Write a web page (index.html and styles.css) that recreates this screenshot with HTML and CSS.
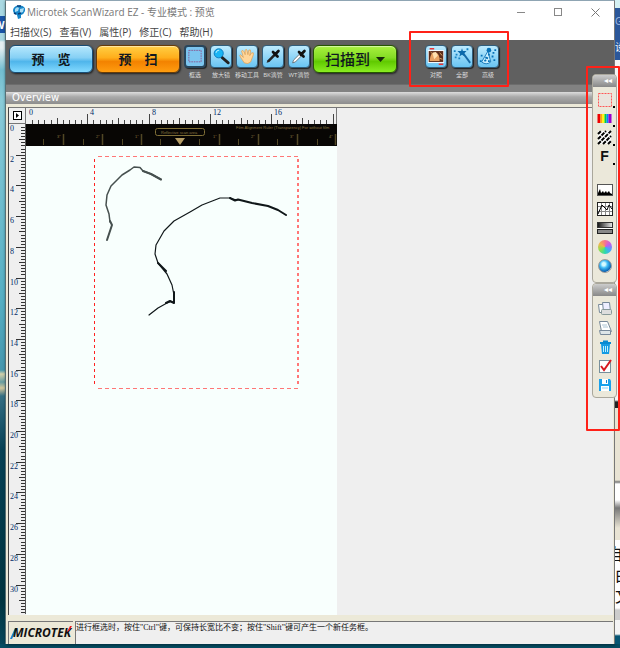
FILE: index.html
```html
<!DOCTYPE html>
<html lang="zh-CN">
<head>
<meta charset="utf-8">
<title>Microtek ScanWizard EZ</title>
<link rel="stylesheet" href="styles.css">
</head>
<body>
<div class="desktop">
  <div class="behind-left"><span class="word-mark">W</span></div>
  <main class="window">
    <header class="titlebar">
      <svg class="app-icon" width="14" height="14" viewBox="0 0 14 14"><path d="M1 5Q2 0 8 0.500Q14 1 13 6Q12 9 9 10L9 13L6 14L5 10Q1 9 1 5Z" fill="#1686c9"/><path d="M3 4Q5 1 7 3L6 6L3 7ZM8 4L12 3L11 7L8 8Z" fill="#a9dcf4"/><path d="M5 1L9 1M6 9L9 8M2 8L4 9" stroke="#0a3c78" stroke-width="1.500"/></svg>
      <h1>Microtek ScanWizard EZ - 专业模式 : 预览</h1>
      <div class="win-controls">
        <button aria-label="最小化"><svg width="9" height="9"><path d="M0 4.500H8" stroke="#888"/></svg></button>
        <button aria-label="最大化"><svg width="9" height="9"><rect x=".5" y=".5" width="7" height="7" fill="none" stroke="#888"/></svg></button>
        <button aria-label="关闭"><svg width="9" height="9"><path d="M.5 .5L8.500 8.500M8.500 .5L.5 8.500" stroke="#777"/></svg></button>
      </div>
    </header>
    <nav class="menubar">
      <button>扫描仪(S)</button><button>查看(V)</button><button>属性(P)</button><button>修正(C)</button><button>帮助(H)</button>
    </nav>
    <div class="toolbar">
      <button class="big blue">预&emsp;览</button>
      <button class="big orange">预&emsp;扫</button>
      <div class="tools">
        <button class="tool pressed"><svg viewBox="0 0 22 22"><rect x="3.500" y="3.500" width="15" height="14" fill="none" stroke="#8b4a86" stroke-dasharray="2 1"/></svg><span>框选</span></button>
        <button class="tool"><svg viewBox="0 0 22 22"><path d="M12 12L19 18" stroke="#222" stroke-width="3" stroke-linecap="round"/><circle cx="8.500" cy="7.500" r="5" fill="#19b5f4" stroke="#0878bd"/><path d="M5.500 7Q6 4 9 4" stroke="#c9f5ff" fill="none"/></svg><span>放大镜</span></button>
        <button class="tool"><svg viewBox="0 0 22 22"><path d="M8 18L4 12Q2 9 4 9L7 12L5 5Q6 3 8 6L9 9L9 4Q10 2 11 4L12 9L13 4Q15 3 15 5L14 10L16 7Q19 6 18 9L15 17Q12 20 8 18Z" fill="#ffd69a" stroke="#e29a45" stroke-width=".7"/></svg><span>移动工具</span></button>
        <button class="tool"><svg viewBox="0 0 22 22"><path d="M4 18L5 15L12 8L14 10L7 17Z" fill="#222"/><path d="M11 6L16 11M13 9L17 5" stroke="#111" stroke-width="3" stroke-linecap="round"/></svg><span>BK滴管</span></button>
        <button class="tool"><svg viewBox="0 0 22 22"><path d="M4 18L5 15L12 8L14 10L7 17Z" fill="#fff" stroke="#555" stroke-width=".8"/><path d="M11 6L16 11M13 9L17 5" stroke="#111" stroke-width="3" stroke-linecap="round"/></svg><span>WT滴管</span></button>
      </div>
      <button class="big green">扫描到<svg width="9" height="5"><path d="M0 0H9L4.500 5Z" fill="#172b0a"/></svg></button>
      <div class="tools extra">
        <button class="tool"><svg viewBox="0 0 22 22"><rect x="2" y="4" width="18" height="14" fill="#fff"/><rect x="3" y="5" width="16" height="12" fill="#5c2d1b"/><path d="M4 16Q5 5 11 7Q15 8 15 16Z" fill="#e7a263"/><path d="M7 7L11 6L13 10L9 14Z" fill="#ffe0ae"/><path d="M15 7L18 10M5 6L7 8M15 13L18 14" stroke="#e6b26c"/><path d="M4 2.500H9M14 19.500H19" stroke="#e33" stroke-width="1.500"/></svg><span>对照</span></button>
        <button class="tool"><svg viewBox="0 0 22 22"><path d="M12 7L20 18" stroke="#1669a5" stroke-width="2"/><path d="M11 2L12 5L16 5L13 8L14 11L11 9L8 11L9 8L6 5L10 5Z" fill="#0b69ab"/><path d="M2 5H4M4 9H6M3 12H5M16 3H18M7 13H9" stroke="#1582c4" stroke-width="2"/></svg><span>全部</span></button>
        <button class="tool"><svg viewBox="0 0 22 22"><path d="M11 5L4 17Q9 21 14 17Z" fill="#c8efff" stroke="#1476b7"/><circle cx="12" cy="4" r="2.500" fill="#0871b6"/><path d="M8 12L11 13M7 16L9 15M11 16H13M11 9H13M16 7H18M18 4H20M3 10H5M15 11H17M17 15H19M2 16H4" stroke="#0871b6" stroke-width="2"/></svg><span>高级</span></button>
      </div>
    </div>
    <div class="divider"></div>
    <h2 class="overview">Overview</h2>
    <section class="workspace" aria-label="Overview">
      <div class="corner"><button aria-label="单位"><svg width="9" height="9"><rect x=".5" y=".5" width="8" height="8" fill="#fff" stroke="#000"/><path d="M3 2V7L6 4.500Z"/></svg></button></div>
      <svg class="ruler-h" id="ruler-h" width="311" height="16"></svg>
      <svg class="ruler-v" id="ruler-v" width="17" height="490"></svg>
      <div class="page">
        <svg width="311" height="490" viewBox="26 124 311 490">
          <rect x="26" y="124" width="311" height="22" fill="#080604"/>
          <g stroke="#514725" fill="none">
            <path d="M63.500 134V145M102.500 134V145M141.500 134V145M219.500 134V145M258.500 134V145M297.500 134V145M335.500 134V145" stroke-width="1.500"/>
            <path d="M43.500 139V145M83.500 139V145M122.500 139V145M160.500 139V145M199.500 139V145M238.500 139V145M277.500 139V145M317.500 139V145"/>
            <rect x="155.500" y="128.500" width="49" height="7" rx="2" stroke="#806f37"/>
          </g>
          <path d="M175 138H185L180 145Z" fill="#b59d65"/>
          <g class="film-text"><text x="161" y="134">Reflective scan area</text><text x="236" y="129">Film Alignment Ruler (Transparency) For without film</text>
          <text x="57" y="138">3"</text><text x="96" y="138">2"</text><text x="135" y="138">1"</text><text x="213" y="138">1"</text><text x="251" y="138">2"</text><text x="290" y="138">3"</text><text x="329" y="138">4"</text></g>
          <g fill="none" stroke="#46504f" stroke-linecap="round" stroke-linejoin="round">
            <path d="M161 179.500L151 174L143 171L140 167.500L134 167L130 170L122 175L111 186L107 195L106 205L109 214L110 222" stroke-width="1.500"/>
            <path d="M110 221L112 225L107 240M161 179.500L151 174L143 171" stroke-width="2"/>
          </g>
          <g fill="none" stroke="#101719" stroke-linecap="round" stroke-linejoin="round">
            <path d="M238 200L232 199L230 198H220L202 205L190 212L174 221L164 231L156 245L155 254L158 263L167 274L172 285L174 295L174 303L171 301.500L167 303L158 308L149 315" stroke-width="1.200"/>
            <path d="M230 198L235 200.500L238 199.500L252 203L268 206L278 210L286 215M158 263L166 271M174 292V303L170 301L166 303" stroke-width="2"/>
          </g>
          <g fill="none">
            <path d="M98 156.500H298M98 388.500H298" stroke="#ff7777" stroke-dasharray="4 3"/>
            <path d="M94.500 159V386" stroke="#ff2020" stroke-dasharray="3 3"/>
            <path d="M298 159V386" stroke="#ff7777" stroke-width="2" stroke-dasharray="3 3"/>
          </g>
        </svg>
      </div>
    </section>
    <footer class="statusbar">
      <div class="logo"><svg width="7" height="11" viewBox="0 0 7 11"><path d="M0 11L5 0L7 1L2 11Z" fill="#147fd0"/></svg><span>MICROTEK</span><svg class="logo-flick" width="5" height="7" viewBox="0 0 5 7"><path d="M0 6L3 0H5L2 5Z" fill="#ed1c24"/></svg></div>
      <p>进行框选时，按住"Ctrl"键，可保持长宽比不变；按住"Shift"键可产生一个新任务框。</p>
    </footer>
  </main>
  <div class="behind-right"><span class="tab">G</span><span class="tab second">设</span><span class="doc-text">自<br>由<br>文</span></div>

  <aside class="palettes">
    <div class="palette first">
      <button class="palette-head" aria-label="收起">◂◂</button>
      <button class="more" aria-label="选框"><svg viewBox="0 0 16 16"><rect x="1.500" y="1.500" width="13" height="13" fill="#eae4dd" stroke="#ff5555" stroke-dasharray="2 1"/></svg></button>
      <button class="more" aria-label="色彩"><svg viewBox="0 0 16 16"><path d="M2 3V12" stroke="#e00" stroke-width="3"/><path d="M4.500 3V12" stroke="#fa0" stroke-width="2"/><path d="M6.500 3V12" stroke="#ff0" stroke-width="2"/><path d="M8.500 3V12" stroke="#0c4" stroke-width="2"/><path d="M10.500 3V12" stroke="#08f" stroke-width="2"/><path d="M13 3V12" stroke="#90c" stroke-width="3"/></svg></button>
      <button class="more" aria-label="网纹"><svg viewBox="0 0 16 16"><rect x="1" y="1" width="13" height="13" fill="#fff"/><path d="M1 4L4 1M1 9L9 1M1 14L14 1M6 14L14 6M11 14L14 11" stroke="#000" stroke-width="2" stroke-dasharray="4 1"/></svg></button>
      <button class="more letter" aria-label="滤镜">F</button>
      <button class="gap-before" aria-label="色阶"><svg viewBox="0 0 16 16"><rect x=".5" y="2.500" width="15" height="11" fill="#fff" stroke="#555"/><path d="M1 13V11L3 7L4 11L6 9L7 11L9 9L10 11L12 9L13 11L15 12V13Z"/></svg></button>
      <button aria-label="曲线"><svg viewBox="0 0 16 16"><rect x=".5" y="1.500" width="15" height="13" fill="#fff" stroke="#222"/><path d="M4.500 2V14M8.500 2V14M12.500 2V14M1 5.500H15M1 10.500H15" stroke="#888"/><path d="M1 13L5 4L10 9L12 4L15 8" stroke="#000" fill="none"/></svg></button>
      <button aria-label="亮度"><svg viewBox="0 0 16 16"><defs><linearGradient id="gray"><stop stop-color="#111"/><stop offset="1" stop-color="#eee"/></linearGradient></defs><rect x=".5" y="2.500" width="15" height="5" fill="url(#gray)" stroke="#333"/><path d="M1 8.500H15" stroke="#fff"/><rect x=".5" y="9.500" width="15" height="4" fill="#888" stroke="#222"/></svg></button>
      <button aria-label="色相"><i class="wheel"></i></button>
      <button aria-label="预览颜色"><i class="lens"></i></button>
    </div>
    <div class="palette">
      <button class="palette-head" aria-label="收起">◂◂</button>
      <button aria-label="复制任务"><svg viewBox="0 0 16 16"><path d="M1.500 3.500H9.500L10.500 11.500H2.500Z" fill="#fff" stroke="#789"/><path d="M5.500 1.500H12.500L13.500 10.500H6.500Z" fill="#eef" stroke="#789"/><rect x="4.500" y="8.500" width="10" height="5" rx="1" fill="#ddd" stroke="#899"/></svg></button>
      <button aria-label="新任务"><svg viewBox="0 0 16 16"><path d="M2.500 1.500H10.500L14.500 11.500H4.500Z" fill="#fff" stroke="#789"/><path d="M2.500 10.500H13.500V14.500H3.500Z" fill="#dde5e8" stroke="#789"/><path d="M5 5H10M6 7H11" stroke="#acc4d4"/></svg></button>
      <button aria-label="删除"><svg viewBox="0 0 16 16"><path d="M4 5H13L12 15H5Z" fill="#139be3"/><path d="M3 4H14M6 2.500H11" stroke="#078ad1" stroke-width="2"/><path d="M6.500 7V13M8.500 7V13M10.500 7V13" stroke="#bdefff"/></svg></button>
      <button aria-label="全选"><svg viewBox="0 0 16 16"><rect x="2.500" y="2.500" width="11" height="12" fill="#fff" stroke="#78909c"/><path d="M4 8L7 12L14 2" fill="none" stroke="#d71920" stroke-width="2"/></svg></button>
      <button aria-label="保存"><svg viewBox="0 0 16 16"><path d="M2 2H13L14 4V14H2Z" fill="#1aa1eb"/><path d="M5 2H11V7H5ZM4 9H12V14H4Z" fill="#fff"/><path d="M9 3H10V6H9Z" fill="#1686d2"/><path d="M5 11H11" stroke="#8bd1f5"/></svg></button>
    </div>
  </aside>
  <div class="mark mark-tools"></div>
  <div class="mark mark-palettes"></div>
</div>
<script src="rulers.js"></script>
</body>
</html>
```
FILE: styles.css
```css
* { box-sizing: border-box; }
body { margin: 0; font-family: "Open Sans", "Noto Sans CJK SC", sans-serif; }
button { margin: 0; padding: 0; border: 0; background: none; font: inherit; color: inherit; }
svg { display: block; }

.desktop {
  position: relative;
  display: grid;
  grid-template-columns: 6px minmax(0, 1fr) 5px;
  min-height: 100vh;
  padding-bottom: 4px;
  background: #064c62;
  overflow: hidden;
}
.behind-left {
  overflow: hidden;
  padding-top: 16px;
  border-right: 1px solid #8d9c9b;
  background: linear-gradient(#a9d8e2 0 40px, #e4eff2 42px 48px, #72bdd0 70px, #8accd9 100px, #55afc3 300px, #4697ad 370px, #d5d1a9 374px, #679da1 382px, #d3c79b 388px, #356f83 396px, #064154 450px, #003440 600px, #07465a);
}
.word-mark { display: block; height: 17px; background: #1a54a6; color: #fff; font-size: 11px; font-weight: 700; line-height: 17px; text-indent: -6px; }
.behind-right {
  overflow: hidden;
  font-size: 10px;
  background: linear-gradient(#d5f1f3 0 8px, #2b579a 8px 60px, #f4f4f4 60px 400px, #222 402px 408px, #e8e3d3 408px 480px, #777 482px, #fff 484px 500px, #777 508px, #e8e3d3 528px 540px, #fff 540px 608px, #ccc 610px 620px, #f4f4f4 620px 634px, #075573 636px);
}
.tab { display: block; height: 26px; padding-top: 13px; color: #a6bde2; line-height: 16px; }
.tab.second { color: #fff; height: 40px; }
.doc-text { display: block; margin-top: 478px; color: #111; font-size: 16px; line-height: 21px; text-indent: -8px; }

.window { display: flex; flex-direction: column; border-top: 1px solid #8fa5b3; border-right: 1px solid #777; background: #ece9d8; box-shadow: 0 1px 3px #002b38; }
.titlebar { display: flex; align-items: center; height: 22px; padding-left: 6px; background: #fff; color: #777; }
.titlebar h1 { margin: 0 auto 0 1px; font-size: 10px; font-weight: 400; line-height: 20px; white-space: nowrap; }
.win-controls { display: flex; gap: 28px; padding-right: 14px; }
.menubar { display: flex; align-items: center; gap: 8px; height: 17px; padding-left: 4px; background: #fff; color: #444; font-size: 10px; line-height: 16px; }

.toolbar { display: flex; align-items: flex-start; gap: 3px; height: 44px; padding: 5px 3px 0; background: #606060; }
.big { width: 84px; height: 28px; border: 1px solid #222; border-radius: 6px; color: #101820; font-size: 13px; font-weight: 700; line-height: 24px; box-shadow: 1px 1px 2px #222, inset 0 1px 1px #fff8; }
.blue { background: linear-gradient(#b6e8fc, #86d0f5 45%, #4fb5eb 60%, #83daff); border-color: #174d76; }
.orange { background: linear-gradient(#ffcf45, #ffae1b 45%, #f38200 60%, #ff9d10); border-color: #673c08; }
.green { display: flex; align-items: center; justify-content: center; gap: 6px; background: linear-gradient(#a9f13f, #84dc24 45%, #60c900 60%, #8aee22); border-color: #265600; font-size: 15px; font-weight: 500; }
.tools { display: flex; gap: 4px; padding-left: 1px; }
.extra { margin-left: 24px; }
.tool { display: flex; flex-direction: column; align-items: center; gap: 2px; width: 22px; color: #ddd; font-size: 6px; line-height: 10px; white-space: nowrap; }
.tool svg { width: 22px; height: 23px; flex: none; border: 1px solid #315e7c; border-radius: 4px; background: linear-gradient(#bdeafd, #69c4f2); box-shadow: 1px 1px 1px #222; }
.tool.pressed svg { border: 2px solid #29465c; background: #7cc5ef; }
.tool span { display: block; }
.divider { height: 8px; background: #828282; border-top: 1px solid #6d6d6d; }
.overview { height: 12px; margin: 0; padding-left: 6px; background: linear-gradient(#ddd, #aaa 40%, #8d8d8d); color: #fff; font: 10px/12px "DejaVu Sans", sans-serif; }

.workspace { display: grid; grid-template-columns: 17px 311px minmax(0, 1fr); grid-template-rows: 16px minmax(490px, 1fr); flex: 1; margin: 3px 1px 6px 2px; border-top: 1px solid #777; border-left: 1px solid #444; background: #efefef; }
.corner { display: grid; place-items: center; border-right: 1px solid #777; border-bottom: 1px solid #777; }
.ruler-h { border-right: 1px solid #777; }
.ruler-v { grid-row: 2; grid-column: 1; border-right: 1px solid #555; }
.page { grid-row: 2; grid-column: 2; background: #f8fffd; }
.ruler-h text, .ruler-v text { font: 8px "Liberation Serif", serif; fill: #002b68; }
.film-text text { font: 4px "Liberation Sans", sans-serif; fill: #88743f; }

.statusbar { display: flex; gap: 2px; height: 23px; padding: 0 1px 0 2px; }
.logo { display: flex; align-items: center; width: 65px; padding-left: 1px; border-top: 1px solid #777; border-left: 1px solid #777; }
.logo span { margin-left: -4px; color: #111; font: italic 700 12px/20px "Open Sans", sans-serif; }
.logo-flick { align-self: flex-start; flex: none; margin: 4px 0 0 -4px; }
.statusbar p { flex: 1; margin: 0; border-top: 1px solid #777; border-left: 1px solid #777; background: #efefef; color: #111; font: 8px/11px "Liberation Serif", "Noto Sans CJK SC", serif; white-space: nowrap; }

.palettes { position: absolute; top: 74px; right: 3px; width: 25px; }
.palette { display: flex; flex-direction: column; align-items: center; padding-bottom: 3px; border: 1px solid #aaa79c; border-radius: 4px; background: #ebe8da; }
.palette.first { padding-bottom: 7px; }
.palette-head { width: 100%; height: 12px; margin-bottom: 3px; padding-right: 4px; border-radius: 4px 4px 0 0; background: linear-gradient(#ccc, #888); color: #fff; font: 8px/12px "DejaVu Sans", sans-serif; text-align: right; }
.palette > button:not(.palette-head) { position: relative; display: grid; place-items: center; width: 20px; height: 19px; flex: none; }
.palette > .palette-head ~ button svg { width: 16px; height: 16px; }
.palette .more::after { content: ""; position: absolute; right: 0; bottom: 1px; width: 2px; height: 2px; background: #000; }
.palette .letter { font: 700 14px/19px "Liberation Sans", sans-serif; color: #111; }
.palette .gap-before { margin-top: 14px; }
.wheel { width: 14px; height: 14px; border-radius: 50%; background: conic-gradient(#f9748c, #c15cf0, #49a4ff, #2bd9ad, #8ce04d, #f3b44e, #f9748c); }
.lens { width: 14px; height: 14px; border: 1px solid #999; border-radius: 50%; background: radial-gradient(circle at 40% 35%, #d5faff 0 15%, #43bdf7 35%, #0962b2 70%, #fff 80%); }

.mark { position: absolute; border: 2px solid #ff2118; border-radius: 1px; pointer-events: none; }
.mark-tools { left: 409px; top: 31px; width: 100px; height: 56px; }
.mark-palettes { right: 0; top: 66px; width: 34px; height: 365px; }
```
FILE: rulers.js
```js
const NS = "http://www.w3.org/2000/svg";

function add(svg, name, attrs, text) {
  const node = document.createElementNS(NS, name);
  for (const key in attrs) node.setAttribute(key, attrs[key]);
  if (text !== undefined) node.textContent = text;
  svg.appendChild(node);
}

// Ten divisions per labelled step, with a longer tick halfway.
function tickLength(i) {
  return i % 10 === 0 ? 10 : i % 5 === 0 ? 6 : 4;
}

const across = document.getElementById("ruler-h");
for (let i = 0; i <= 50; i++) {
  const x = Math.round(i * 6.13);
  if (i > 0) add(across, "rect", { x, y: 16 - tickLength(i), width: 1, height: tickLength(i), fill: "#444" });
  if (i % 10 === 0 && i < 50) add(across, "text", { x: x + 3, y: 7 }, i / 10 * 4);
}

const down = document.getElementById("ruler-v");
for (let i = 0; i < 160; i++) {
  const y = Math.round(i * 3.07);
  const length = i % 10 === 0 ? 9 : tickLength(i);
  if (i > 0) add(down, "rect", { x: 16 - length, y, width: length, height: 1, fill: "#333" });
  if (i % 10 === 0) add(down, "text", { x: 1, y: y + 7 }, i / 10 * 2);
}
```
